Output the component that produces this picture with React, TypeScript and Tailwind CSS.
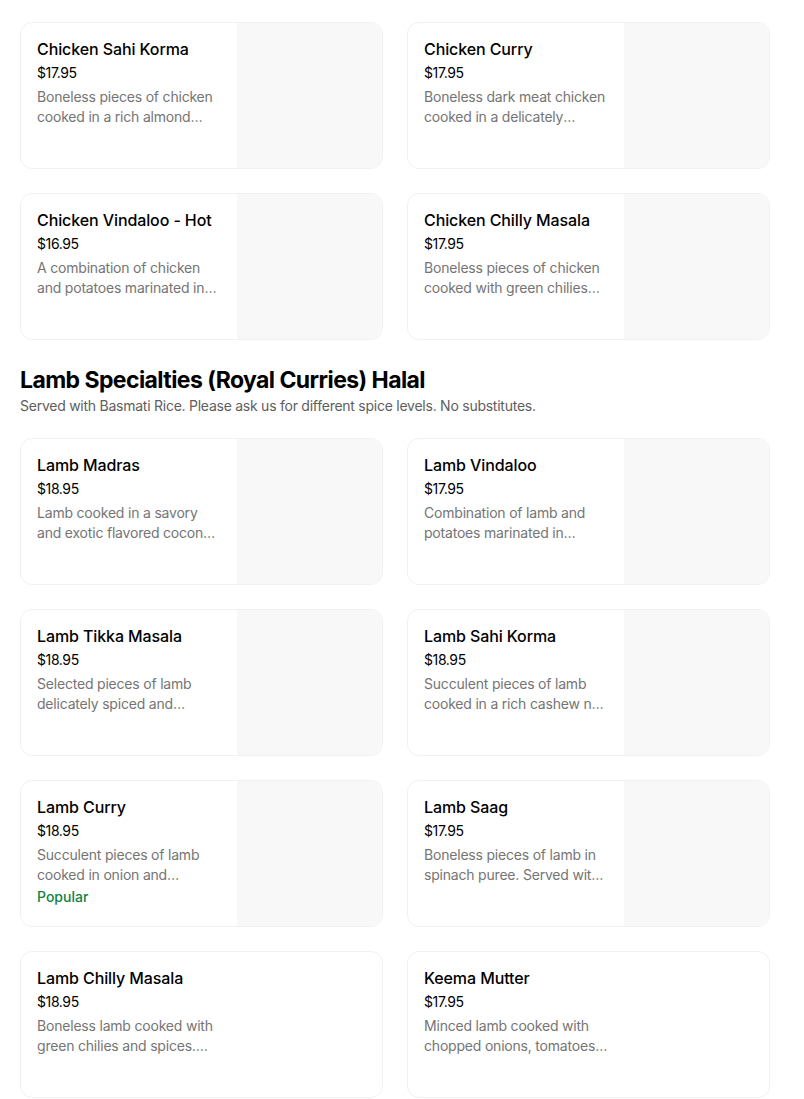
import React from "react";

type Item = {
  name: string;
  price: string;
  desc: string;
  popular?: boolean;
  image?: boolean;
};

const chickenItems: Item[] = [
  {
    name: "Chicken Sahi Korma",
    price: "$17.95",
    desc: "Boneless pieces of chicken cooked in a rich almond sauce with cream and mild spices.",
    image: true,
  },
  {
    name: "Chicken Curry",
    price: "$17.95",
    desc: "Boneless dark meat chicken cooked in a delicately spiced onion and tomato gravy.",
    image: true,
  },
  {
    name: "Chicken Vindaloo - Hot",
    price: "$16.95",
    desc: "A combination of chicken and potatoes marinated in hot-and-tangy vinegar sauce.",
    image: true,
  },
  {
    name: "Chicken Chilly Masala",
    price: "$17.95",
    desc: "Boneless pieces of chicken cooked with green chilies and onions.",
    image: true,
  },
];

const lambItems: Item[] = [
  {
    name: "Lamb Madras",
    price: "$18.95",
    desc: "Lamb cooked in a savory and exotic flavored coconut sauce.",
    image: true,
  },
  {
    name: "Lamb Vindaloo",
    price: "$17.95",
    desc: "Combination of lamb and potatoes marinated in vinegar and hot spices.",
    image: true,
  },
  {
    name: "Lamb Tikka Masala",
    price: "$18.95",
    desc: "Selected pieces of lamb delicately spiced and cooked in a creamy tomato sauce.",
    image: true,
  },
  {
    name: "Lamb Sahi Korma",
    price: "$18.95",
    desc: "Succulent pieces of lamb cooked in a rich cashew nut sauce.",
    image: true,
  },
  {
    name: "Lamb Curry",
    price: "$18.95",
    desc: "Succulent pieces of lamb cooked in onion and traditional herbs and spices.",
    popular: true,
    image: true,
  },
  {
    name: "Lamb Saag",
    price: "$17.95",
    desc: "Boneless pieces of lamb in spinach puree. Served with rice.",
    image: true,
  },
  {
    name: "Lamb Chilly Masala",
    price: "$18.95",
    desc: "Boneless lamb cooked with green chilies and spices. Served with rice.",
  },
  {
    name: "Keema Mutter",
    price: "$17.95",
    desc: "Minced lamb cooked with chopped onions, tomatoes and green peas.",
  },
];

const MenuCard = ({ item }: { item: Item }) => {
  return (
    <div className="flex h-[147px] overflow-hidden rounded-xl border border-[#f1f1f1] bg-white">
      <div className="flex-1 min-w-0 px-4 pt-4">
        <div className="text-[16px] leading-5 font-medium tracking-[-0.1px] text-black">
          {item.name}
        </div>
        <div className="mt-1 text-[14px] leading-5 tracking-[-0.4px] text-black">
          {item.price}
        </div>
        <div className="mt-1 text-[14px] leading-5 tracking-[-0.2px] text-[#757575] line-clamp-2">
          {item.desc}
        </div>
        {item.popular && (
          <div className="mt-0.5 text-[14px] leading-5 font-medium text-[#0e8345]">Popular</div>
        )}
      </div>
      <div className={item.image ? "w-[145px] shrink-0 bg-[#f8f8f8]" : "w-[145px] shrink-0"}></div>
    </div>
  );
};

export default function App() {
  return (
    <div
      className="min-h-screen bg-white"
      style={{ fontFamily: "Inter, 'Liberation Sans', sans-serif" }}
    >
      <div className="w-[750px] ml-5 pt-[22px]">
        <div className="grid grid-cols-2 gap-x-6 gap-y-6">
          {chickenItems.map((item) => (
            <MenuCard key={item.name} item={item} />
          ))}
        </div>

        <h2 className="mt-6 text-[23px] leading-8 font-bold tracking-tight text-black">
          Lamb Specialties (Royal Curries) Halal
        </h2>
        <p className="text-[14px] leading-5 tracking-[-0.25px] text-[#5e5e5e]">
          Served with Basmati Rice. Please ask us for different spice levels. No substitutes.
        </p>

        <div className="mt-[22px] grid grid-cols-2 gap-x-6 gap-y-6">
          {lambItems.map((item) => (
            <MenuCard key={item.name} item={item} />
          ))}
        </div>
      </div>
    </div>
  );
}
